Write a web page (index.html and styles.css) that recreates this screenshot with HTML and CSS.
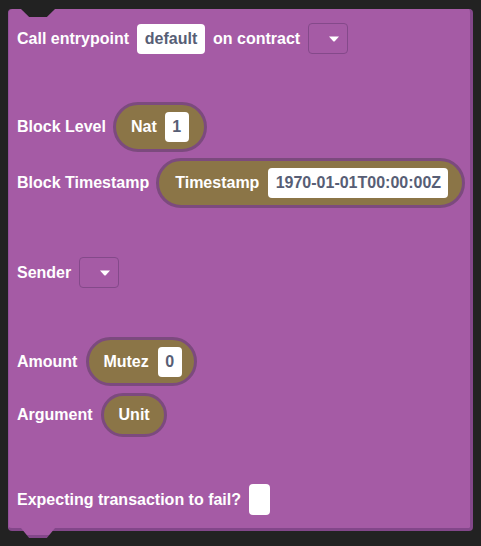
FILE: index.html
```html
<!DOCTYPE html>
<html>
<head>
<meta charset="utf-8">
<link rel="stylesheet" href="styles.css">
</head>
<body>
<div class="block">
  <div class="row r1">
    <span class="label">Call entrypoint</span>
    <span class="field wide">default</span>
    <span class="label">on contract</span>
    <span class="dropdown"><svg width="10" height="6" viewBox="0 0 10 6"><path d="M0 0.5 H10 L6 5 Q5 6 4 5 Z" fill="#fff"/></svg></span>
  </div>
  <div class="row r2">
    <span class="label">Block Level</span>
    <span class="pill nat"><span class="label">Nat</span><span class="field num">1</span></span>
  </div>
  <div class="row r3">
    <span class="label">Block Timestamp</span>
    <span class="pill ts"><span class="label">Timestamp</span><span class="field tsf">1970-01-01T00:00:00Z</span></span>
  </div>
  <div class="row r4">
    <span class="label">Sender</span>
    <span class="dropdown"><svg width="10" height="6" viewBox="0 0 10 6"><path d="M0 0.5 H10 L6 5 Q5 6 4 5 Z" fill="#fff"/></svg></span>
  </div>
  <div class="row r5">
    <span class="label">Amount</span>
    <span class="pill mutez"><span class="label">Mutez</span><span class="field num">0</span></span>
  </div>
  <div class="row r6">
    <span class="label">Argument</span>
    <span class="pill unit"><span class="label">Unit</span></span>
  </div>
  <div class="row r7">
    <span class="label">Expecting transaction to fail?</span>
    <span class="check"></span>
  </div>
</div>
</body>
</html>
```
FILE: styles.css
```css
html, body {
  margin: 0;
  padding: 0;
  background: #222222;
  width: 481px;
  height: 546px;
  overflow: hidden;
}
body {
  font-family: "Liberation Sans", Arial, sans-serif;
  font-weight: bold;
  font-size: 16px;
}
.block {
  position: relative;
  margin-left: 8px;
  margin-top: 9px;
  width: 453px;
  height: 505px;
  background: #a55ba5;
  border-left: 1px solid #93519a;
  border-right: 3px solid #83478a;
  border-bottom: 3px solid #83478a;
  border-radius: 4px;
  padding: 14px 0 0 8px;
  box-sizing: content-box;
}
.block::before {
  content: "";
  position: absolute;
  top: 0;
  left: 12px;
  width: 34px;
  height: 8px;
  background: #222222;
  clip-path: polygon(0 0, 100% 0, 76% 100%, 24% 100%);
}
.block::after {
  content: "";
  position: absolute;
  bottom: -10px;
  left: 12px;
  width: 34px;
  height: 10px;
  background: linear-gradient(#a55ba5 calc(100% - 3px), #83478a 0);
  clip-path: polygon(0 0, 100% 0, 76% 100%, 24% 100%);
}
.row {
  display: flex;
  align-items: center;
  gap: 8px;
  color: #fff;
}
.label { color: #fff; white-space: nowrap; }
.r1 { height: 31px; }
.r2 { height: 50px; margin-top: 48px; gap: 7px; }
.r3 { height: 50px; margin-top: 6px; gap: 7px; }
.r4 { height: 31px; margin-top: 49px; }
.r5 { height: 49px; margin-top: 49px; gap: 9px; }
.r6 { height: 44px; margin-top: 7px; }
.r7 { height: 31px; margin-top: 47px; }
.field {
  display: flex;
  align-items: center;
  justify-content: center;
  height: 30px;
  background: #fff;
  color: #575e75;
  border-radius: 4px;
  box-sizing: border-box;
  flex: none;
}
.wide { width: 68px; }
.num { width: 24px; }
.tsf { width: 180px; }
.dropdown {
  display: flex;
  align-items: center;
  justify-content: center;
  width: 40px;
  height: 31px;
  box-sizing: border-box;
  border: 1px solid #84498a;
  border-radius: 4px;
  padding-left: 12px;
  flex: none;
}
.pill {
  display: flex;
  align-items: center;
  gap: 8px;
  height: 100%;
  box-sizing: border-box;
  background: #8b7547;
  border: 3px solid #7c4a7e;
  border-radius: 26px;
  flex: none;
}
.nat { width: 94px; padding-left: 15px; }
.ts { width: 309px; padding-left: 16px; gap: 9px; }
.mutez { width: 111px; padding-left: 14px; gap: 9px; }
.unit { width: 66px; padding-left: 15px; }
.check {
  width: 21px;
  height: 31px;
  background: #fff;
  border-radius: 4px;
}
```
